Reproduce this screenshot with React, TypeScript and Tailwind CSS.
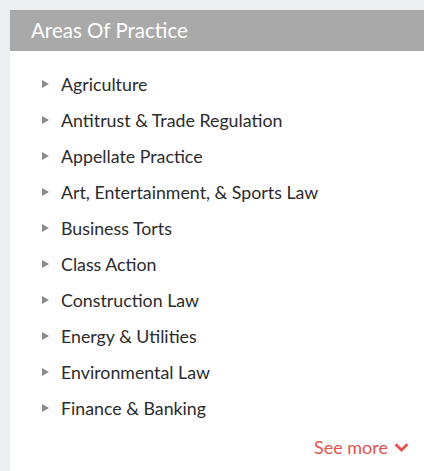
const areas = [
  'Agriculture',
  'Antitrust & Trade Regulation',
  'Appellate Practice',
  'Art, Entertainment, & Sports Law',
  'Business Torts',
  'Class Action',
  'Construction Law',
  'Energy & Utilities',
  'Environmental Law',
  'Finance & Banking',
];

export default function App() {
  return (
    <div className="flex h-[471px] w-[424px] bg-[#eceef0] font-['Lato',sans-serif]">
      <div className="ml-[10px] mt-[10px] flex flex-1 flex-col bg-white">
        <div className="flex h-[41px] items-center bg-[#a9a9a9] pl-[21px] text-[20.5px] text-white">
          Areas Of Practice
        </div>
        <ul className="pt-[15px]">
          {areas.map((a) => (
            <li key={a} className="flex h-[36px] items-center pl-[32px] text-[17.8px] text-[#2b2b2b]">
              <svg className="mr-[12px] h-[8px] w-[7px]" viewBox="0 0 7 8">
                <path d="M0 0L7 4L0 8Z" fill="#8a8a8a" />
              </svg>
              {a}
            </li>
          ))}
        </ul>
        <div className="mt-[8px] flex items-center justify-end pr-[15px] text-[18px] text-[#e2534b]">
          See more
          <svg className="ml-[6px] h-[11px] w-[15px]" viewBox="0 0 15 11">
            <path d="M1.6 2.2L7.5 8L13.4 2.2" fill="none" stroke="#e2534b" strokeWidth="2.8" />
          </svg>
        </div>
      </div>
    </div>
  );
}
